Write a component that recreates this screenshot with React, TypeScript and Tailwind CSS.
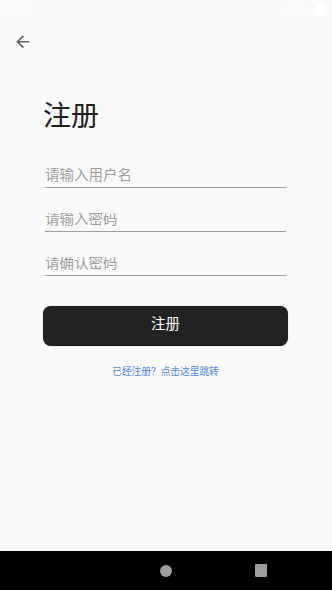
import React from "react";

export default function App() {
  const inputCls =
    "block w-full h-[14.5px] p-0 text-[14.5px] leading-[14.5px] bg-transparent outline-none placeholder:text-[#9e9e9e] text-[#212121]";
  return (
    <div
      className="w-[332px] h-[590px] flex flex-col bg-[#fafafa] overflow-hidden"
      style={{ fontFamily: 'Roboto, "Noto Sans CJK SC", sans-serif' }}
    >
      {/* status bar */}
      <div className="h-[24px] flex items-start justify-between px-[6px] pt-[4px] text-white">
        <span className="text-[11px] leading-[12px]">8:14</span>
        <div className="flex items-start gap-[6px] pr-[2px]">
          <span className="text-[8px] leading-[10px] mt-[1px] font-medium">LTE</span>
          <svg width="6" height="6" viewBox="0 0 6 6" className="mt-[5px]">
            <path d="M6 0 L6 6 L0 6 Z" fill="#ffffff" />
          </svg>
          <div className="w-[7px] h-[11px] bg-white rounded-[1px]" />
        </div>
      </div>

      <div className="flex-1 flex flex-col">
        {/* back arrow */}
        <div className="pl-[13px] pt-[8px]">
          <svg width="19.5" height="19.5" viewBox="0 0 24 24" className="block">
            <path
              d="M20 11H7.83l5.59-5.59L12 4l-8 8 8 8 1.41-1.41L7.83 13H20v-2z"
              fill="#616161"
            />
          </svg>
        </div>

        <div className="pl-[43px] pr-[44px] flex flex-col">
          <h1 className="mt-[51px] text-[28px] leading-[28px] text-[#212121] font-normal">注册</h1>

          <div className="mx-[2px] mt-[36px] flex flex-col">
            <div className="pt-[1.5px] pb-[4px] border-b border-[#9e9e9e]">
              <input className={inputCls} placeholder="请输入用户名" />
            </div>
            <div className="mt-[23.5px] pt-[1.5px] pb-[4px] border-b border-[#9e9e9e]">
              <input type="password" className={inputCls} placeholder="请输入密码" />
            </div>
            <div className="mt-[23px] pt-[1.5px] pb-[4px] border-b border-[#9e9e9e]">
              <input type="password" className={inputCls} placeholder="请确认密码" />
            </div>
          </div>

          <button className="mt-[29.5px] h-[40px] w-full rounded-[8px] bg-[#212121] text-white text-[14.5px] leading-[14.5px] shadow-[0_0_1px_rgba(0,0,0,0.5)]">
            注册
          </button>

          <div className="mt-[21px] text-center text-[9.7px] leading-[10px] text-[#5088e4]">
            已经注册？点击这里跳转
          </div>
        </div>
      </div>

      {/* nav bar */}
      <div className="h-[39px] bg-black flex items-center justify-center gap-[83px]">
        <div className="w-[12px] h-[12px]" />
        <div className="w-[12px] h-[12px] rounded-full bg-[#9e9e9e]" />
        <div className="w-[12px] h-[13px] bg-[#9e9e9e] rounded-[1px]" />
      </div>
    </div>
  );
}
